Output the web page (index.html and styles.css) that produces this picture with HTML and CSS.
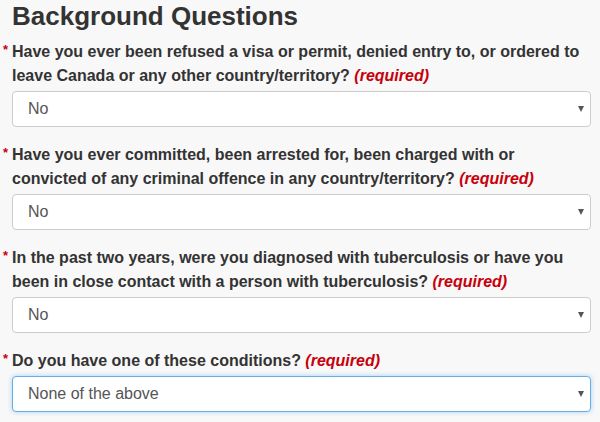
FILE: index.html
```html
<!DOCTYPE html>
<html>
<head>
<meta charset="utf-8">
<link rel="stylesheet" href="styles.css">
</head>
<body>
<div class="page">
  <h2 class="title">Background Questions</h2>
  <div class="group">
    <div class="label"><span class="star">*</span><span class="text">Have you ever been refused a visa or permit, denied entry to, or ordered to leave Canada or any other country/territory? <em class="req">(required)</em></span></div>
    <div class="select"><span class="value">No</span><span class="caret"></span></div>
  </div>
  <div class="group">
    <div class="label"><span class="star">*</span><span class="text">Have you ever committed, been arrested for, been charged with or convicted of any criminal offence in any country/territory? <em class="req">(required)</em></span></div>
    <div class="select"><span class="value">No</span><span class="caret"></span></div>
  </div>
  <div class="group">
    <div class="label"><span class="star">*</span><span class="text">In the past two years, were you diagnosed with tuberculosis or have you been in close contact with a person with tuberculosis? <em class="req">(required)</em></span></div>
    <div class="select"><span class="value">No</span><span class="caret"></span></div>
  </div>
  <div class="group">
    <div class="label"><span class="star">*</span><span class="text">Do you have one of these conditions? <em class="req">(required)</em></span></div>
    <div class="select focus"><span class="value">None of the above</span><span class="caret"></span></div>
  </div>
</div>
</body>
</html>
```
FILE: styles.css
```css
html, body {
  margin: 0;
  padding: 0;
  background: #f8f8f8;
}
body {
  font-family: "Liberation Sans", Arial, sans-serif;
  color: #333;
  width: 600px;
  height: 422px;
  overflow: hidden;
}
.page {
  padding: 0 9px 0 0;
}
.title {
  margin: 0 0 0 12px;
  font-size: 26px;
  font-weight: bold;
  line-height: 32px;
  color: #333;
}
.title + .group {
  padding-top: 8px;
}
.group + .group {
  padding-top: 16px;
}
.label {
  display: flex;
  font-size: 16px;
  font-weight: bold;
  line-height: 24px;
  margin-bottom: 3px;
}
.star {
  flex: 0 0 9px;
  padding-left: 3px;
  color: #c9000f;
  font-size: 13px;
  line-height: 20px;
  font-weight: bold;
}
.text {
  flex: 1;
}
.req {
  color: #c7000d;
  font-style: italic;
  font-weight: bold;
}
.select {
  margin-left: 12px;
  height: 34px;
  border: 1px solid #ccc;
  border-radius: 4px;
  background: #fff;
  display: flex;
  align-items: center;
  justify-content: space-between;
  padding: 0 6px 0 15px;
  font-size: 16px;
  color: #555;
}
.select.focus {
  border-color: #66afe9;
  box-shadow: 0 0 5px rgba(102, 175, 233, 0.55);
}
.caret {
  width: 0;
  height: 0;
  border-left: 3.5px solid transparent;
  border-right: 3.5px solid transparent;
  border-top: 6px solid #555;
}
```
